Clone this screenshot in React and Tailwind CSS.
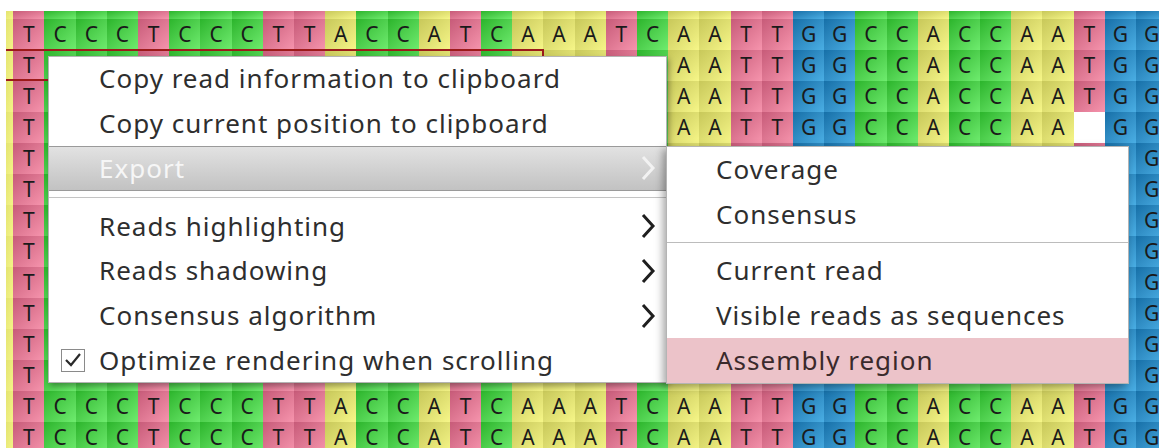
import React from "react";

const SEQ = "TCCCTCCCTTACCATCAAATCAATTGGCCACCAATGG";

const COLORS = {
  T: "bg-linear-to-br from-[#c75b79] to-[#f694ad]",
  C: "bg-linear-to-br from-[#2bb52b] to-[#6eec6e]",
  A: "bg-linear-to-br from-[#c8c85a] to-[#f6f688]",
  G: "bg-linear-to-br from-[#1670a8] to-[#4aaee4]",
  _: "bg-white",
};

const FONT = { fontFamily: '"Noto Sans", "Open Sans", sans-serif' };

function Cell({ b, showText = true }) {
  return (
    <div
      className={`w-[31.2px] shrink-0 h-full flex items-center justify-center text-[21px] text-[#1a1a1a] ${COLORS[b]}`}
    >
      {showText && b !== "_" ? b : ""}
    </div>
  );
}

function Row({ h, gapAt, showText = true }) {
  return (
    <div className={`flex ${h}`}>
      <div className="w-[6px] shrink-0 bg-white" />
      <div className="w-[7.3px] shrink-0 bg-linear-to-br from-[#e4e470] to-[#f4f488]" />
      {SEQ.split("").map((b, i) => (
        <Cell key={i} b={i === gapAt ? "_" : b} showText={showText} />
      ))}
    </div>
  );
}

function Chevron({ white }) {
  return (
    <svg width="16" height="28" viewBox="0 0 16 28" className="shrink-0">
      <polyline
        points="3,3 13,14 3,25"
        fill="none"
        stroke={white ? "#f2f2f2" : "#1e1e1e"}
        strokeWidth="3"
        strokeLinejoin="miter"
      />
    </svg>
  );
}

function Item({ children, h = "h-[45px]", arrow, check }) {
  return (
    <div className={`relative flex items-center ${h} pl-[50px] pr-[10px] text-[#2e2e2e]`}>
      {check && (
        <div className="absolute left-[12px] w-[24px] h-[23px] border border-[#8a8a8a] bg-white flex items-center justify-center">
          <svg width="18" height="16" viewBox="0 0 18 16">
            <polyline points="2,8 7,13 16,2" fill="none" stroke="#2a2a2a" strokeWidth="2.2" />
          </svg>
        </div>
      )}
      <span className="flex-1 whitespace-nowrap">{children}</span>
      {arrow && <Chevron />}
    </div>
  );
}

export default function App() {
  const rows = [];
  for (let r = 0; r < 14; r++) {
    rows.push(<Row key={r} h="h-[31px]" gapAt={r === 3 ? 34 : -1} />);
  }
  return (
    <div className="relative w-[1159px] h-[448px] overflow-hidden bg-white" style={FONT}>
      <div className="pt-[11px]">
        <Row h="h-[8px]" showText={false} />
        {rows}
      </div>

      {/* selected read outline */}
      <div className="absolute left-[6px] top-[49px] w-[538px] h-[32px] border-2 border-l-0 border-[#9c1a1a]" />

      {/* main context menu */}
      <div className="absolute left-[48px] top-[56px] w-[619px] h-[327px] bg-white border border-[#b4b4b4] shadow-[2px_3px_6px_rgba(0,0,0,0.35)] text-[26px] tracking-[1px] flex flex-col">
        <Item h="h-[44px]">Copy read information to clipboard</Item>
        <Item>Copy current position to clipboard</Item>
        <div className="flex items-center h-[45px] pl-[50px] pr-[10px] border-t border-b border-[#9a9a9a] bg-linear-to-b from-[#e2e2e2] to-[#c2c2c2] text-[#f6f6f6]">
          <span className="flex-1">Export</span>
          <Chevron white />
        </div>
        <div className="h-[14px] flex items-center">
          <div className="w-full h-[2px] border-t border-[#c4c4c4] border-b border-b-white" />
        </div>
        <Item h="h-[44px]" arrow>Reads highlighting</Item>
        <Item h="h-[45px]" arrow>Reads shadowing</Item>
        <Item h="h-[45px]" arrow>Consensus algorithm</Item>
        <Item h="h-[44px]" check>Optimize rendering when scrolling</Item>
      </div>

      {/* submenu */}
      <div className="absolute left-[666px] top-[146px] w-[463px] h-[238px] bg-white border border-[#b4b4b4] shadow-[-3px_3px_8px_rgba(0,0,0,0.35)] text-[26px] tracking-[1px] flex flex-col text-[#2e2e2e]">
        <div className="h-[45px] flex items-center pl-[49px]">Coverage</div>
        <div className="h-[45px] flex items-center pl-[49px]">Consensus</div>
        <div className="h-[11px] flex items-center">
          <div className="w-full h-px bg-[#bcbcbc]" />
        </div>
        <div className="h-[45px] flex items-center pl-[49px]">Current read</div>
        <div className="h-[45px] flex items-center pl-[49px]">Visible reads as sequences</div>
        <div className="flex-1 flex items-center pl-[49px] bg-[#ecc3c9] text-[#3a2a2c]">Assembly region</div>
      </div>
    </div>
  );
}
